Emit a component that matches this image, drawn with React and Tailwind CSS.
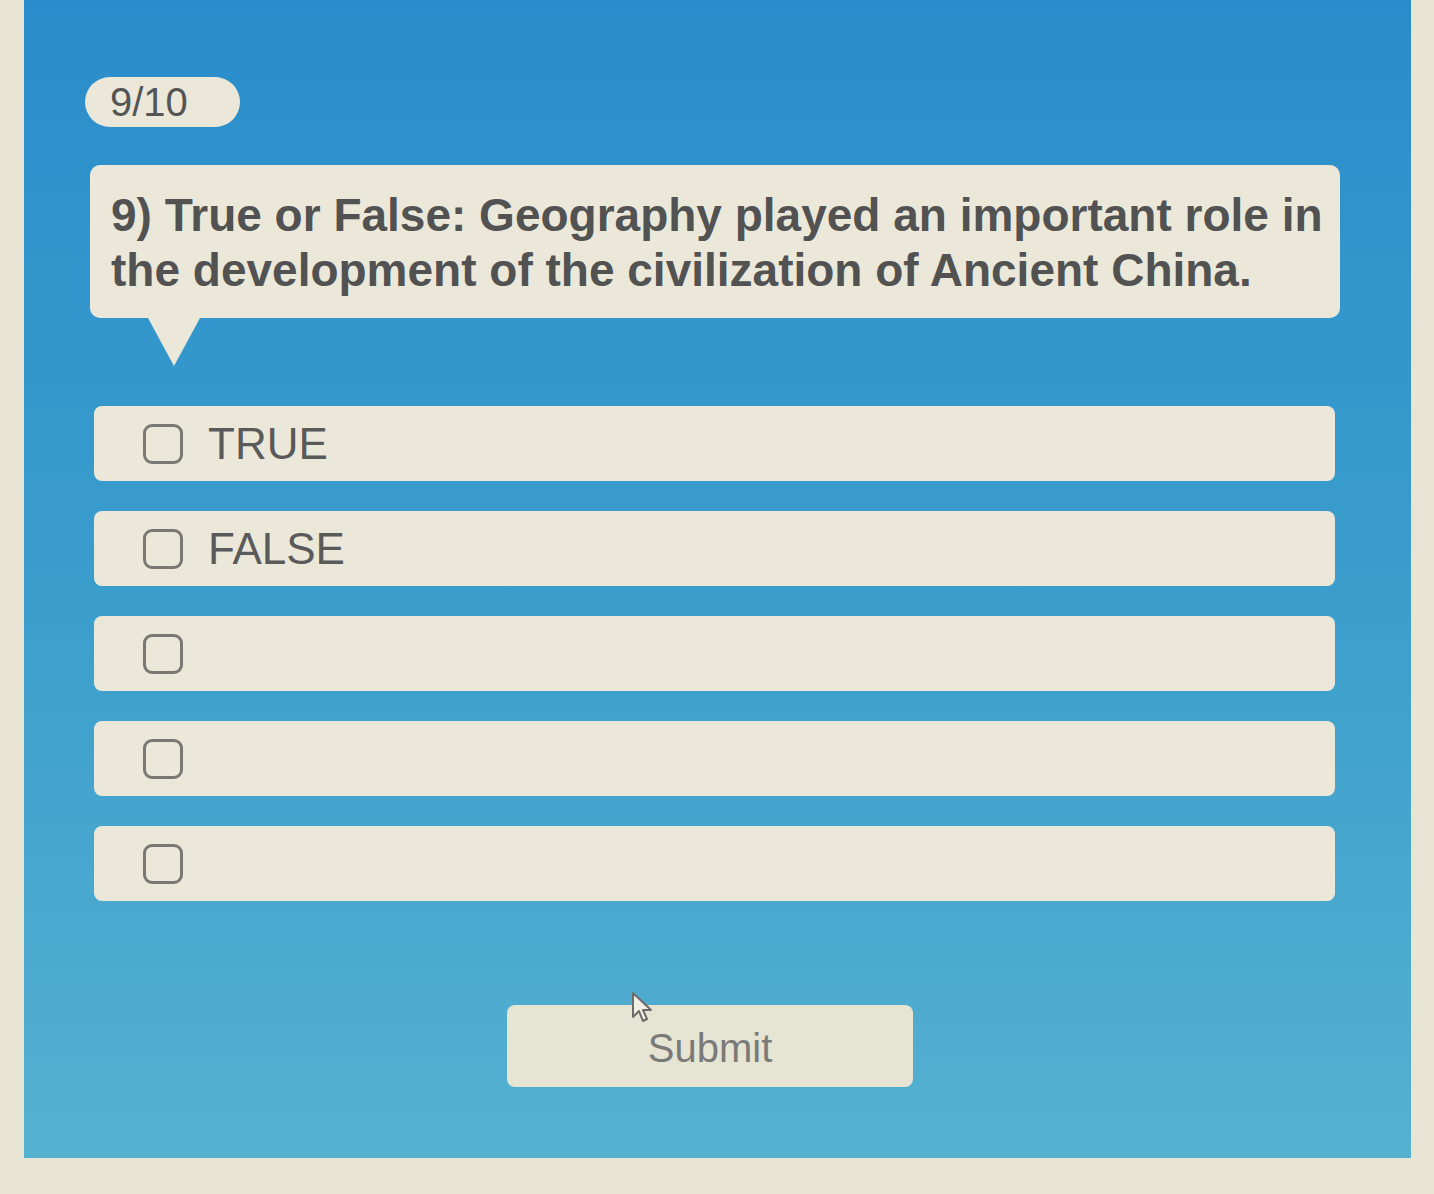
import React, { useState } from 'react';

const OPTIONS = ['TRUE', 'FALSE', '', '', ''];

const App = () => {
  const [selected, setSelected] = useState(null);

  return (
    <div
      className="w-[1434px] h-[1194px] bg-[#e8e5d4] overflow-hidden"
      style={{ fontFamily: '"Liberation Sans", Arial, sans-serif' }}
    >
      {/* Blue quiz panel */}
      <div className="ml-[24px] mr-[23px] h-[1158px] bg-gradient-to-b from-[#2a8dcb] via-[#3a9dcc] to-[#55b1d0] pt-[77px] pl-[61px]">
        <div className="w-[155px] h-[50px] rounded-full bg-[#ebe8da] flex items-center pl-[25px] text-[40px] text-[#555] leading-none">
          9/10
        </div>

        {/* Question bubble */}
        <div className="relative mt-[38px] w-[1250px] ml-[5px]">
          <div className="bg-[#ebe8da] rounded-[10px] pl-[21px] pr-[8px] pt-[23px] pb-[26px] h-[153px]">
            <p className="text-[46px] font-bold text-[#525252] leading-[55px]">
              9) True or False: Geography played an important role in the development of the civilization of Ancient China.
            </p>
          </div>
          <div className="ml-[58px] w-0 h-0 border-l-[26px] border-r-[26px] border-t-[48px] border-l-transparent border-r-transparent border-t-[#ebe8da]" />
        </div>

        {/* Options */}
        <div className="mt-[40px] ml-[9px] w-[1241px] flex flex-col gap-[30px]">
          {OPTIONS.map((opt, idx) => (
            <button
              key={idx}
              onClick={() => setSelected(idx)}
              className="h-[75px] rounded-[8px] bg-[#ebe8da] flex items-center pl-[49px] text-left"
            >
              <span
                className={`w-[40px] h-[40px] rounded-[9px] border-[3px] border-[#7a7874] shrink-0 ${
                  selected === idx ? 'bg-[#7a7874]' : ''
                }`}
              />
              {opt && (
                <span className="ml-[25px] text-[44px] text-[#5a5a5a] leading-none">{opt}</span>
              )}
            </button>
          ))}
        </div>

        {/* Submit */}
        <div className="relative mt-[104px] ml-[422px] w-[406px]">
          <button className="w-[406px] h-[82px] rounded-[8px] bg-[#e6e4d3] text-[40px] text-[#7a7a78] flex items-center justify-center pt-[4px]">
            Submit
          </button>
          {/* mouse pointer */}
          <svg
            className="absolute left-[124px] top-[-14px]"
            width="26"
            height="34"
            viewBox="0 0 26 34"
          >
            <path
              d="M2 2 L2 26 L8 20 L12 30 L16 28 L12 19 L20 19 Z"
              fill="#f2f0e6"
              stroke="#6b6b6b"
              strokeWidth="2"
              strokeLinejoin="round"
            />
          </svg>
        </div>
      </div>
    </div>
  );
};

export default App;
